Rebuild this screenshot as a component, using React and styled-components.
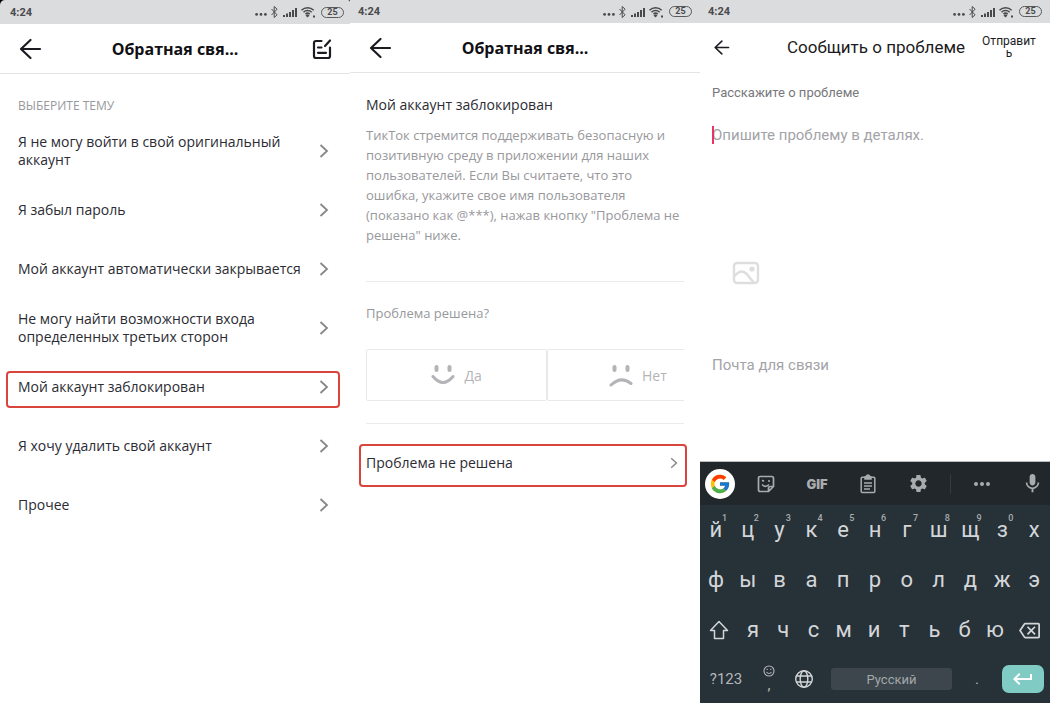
import React, { useState } from "react";
import styled, { createGlobalStyle } from "styled-components";
import { FcGoogle } from "react-icons/fc";
import {
  MdKeyboardReturn,
  MdMic,
  MdOutlineBackspace,
  MdSettings,
} from "react-icons/md";

const GlobalStyle = createGlobalStyle`
  * {
    box-sizing: border-box;
  }

  body {
    margin: 0;
    background-color: #fff;
    font-family: "Open Sans", "Noto Sans", sans-serif;
    color: #2b2b33;
  }

  button,
  input,
  textarea {
    margin: 0;
    padding: 0;
    border: none;
    background: none;
    color: inherit;
    font: inherit;
    text-align: left;
  }

  button {
    cursor: pointer;
  }

  svg {
    display: block;
    flex-shrink: 0;
  }
`;

const Screens = styled.div`
  display: grid;
  grid-template-columns: repeat(3, minmax(0, 1fr));
  min-height: 100vh;
`;

const Screen = styled.section`
  display: flex;
  flex-direction: column;
  font-family: ${(props) =>
    props.$android ? 'Roboto, "Noto Sans", sans-serif' : "inherit"};
`;

// Status bar
const StatusWrap = styled.div`
  background-color: ${(props) => (props.$first ? "#000" : "transparent")};
`;

const StatusBar = styled.div`
  display: flex;
  align-items: center;
  height: ${(props) => (props.$first ? "24px" : "23px")};
  padding: 0 ${(props) => (props.$first ? "6px 0 10px" : "8px")};
  border-radius: ${(props) => (props.$first ? "5px 2px 0 0" : "0")};
  background-color: #dbdcde;
  color: #4a4a4c;
  font-family: Roboto, sans-serif;
`;

const Clock = styled.time`
  flex: 1;
  font-size: 11px;
  font-weight: 700;
`;

const Battery = styled.span`
  width: 23px;
  height: 11px;
  margin-left: 5px;
  border: 1px solid #5a5a5c;
  border-radius: 6px;
  font-size: 9px;
  font-weight: 700;
  line-height: 9px;
  text-align: center;
`;

// Header
const Header = styled.header`
  display: grid;
  grid-template-columns: 40px 1fr 40px;
  align-items: center;
  height: 50px;
  padding: 0 18px;
  border-bottom: 1px solid #e4e4e6;
`;

const HeaderButton = styled.button`
  display: flex;
  justify-content: ${(props) => (props.$end ? "flex-end" : "flex-start")};
  color: #1b1b22;
`;

const Title = styled.h1`
  margin: 0;
  color: #101014;
  font-size: 16px;
  font-weight: 700;
  line-height: 20px;
  text-align: center;
`;

// Topics
const Topics = styled.main`
  padding: 22px 21px 0 18px;
`;

const SectionLabel = styled.h2`
  margin: 0;
  color: #98989c;
  font-size: 12px;
  font-weight: 400;
  line-height: 20px;
`;

const TopicList = styled.ul`
  margin: 0;
  padding: 5px 0 0;
  list-style: none;
`;

const Highlight = styled.span`
  position: absolute;
  inset: ${(props) => props.$inset};
  border: 2px solid #d9453d;
  border-radius: 4px;
  pointer-events: none;
`;

const RowButton = styled.button`
  position: relative;
  display: flex;
  align-items: center;
  justify-content: space-between;
  width: 100%;
  height: ${(props) => props.$height};
  padding-right: ${(props) => props.$endGap || "0"};
  font-size: 14px;
  line-height: 18px;
`;

const RowText = styled.span`
  max-width: 290px;
`;

// Answer
const Answer = styled.main`
  padding: 22px 16px 0;
`;

const AnswerTitle = styled.h2`
  margin: 0 0 10px;
  font-size: 14px;
  font-weight: 400;
  line-height: 20px;
`;

const AnswerText = styled.p`
  margin: 0;
  padding-bottom: 36px;
  border-bottom: 1px solid #ebebec;
  color: #98989c;
  font-size: 13px;
  line-height: 20px;
`;

const Question = styled.h3`
  margin: 21px 0 26px;
  color: #98989c;
  font-size: 13px;
  font-weight: 400;
  line-height: 20px;
`;

const Votes = styled.div`
  display: flex;
  overflow: hidden;
  padding-bottom: 22px;
  border-bottom: 1px solid #ebebec;
`;

const VoteButton = styled.button`
  display: flex;
  flex: 0 0 57%;
  align-items: center;
  justify-content: center;
  gap: 9px;
  height: 52px;
  border: 1px solid #e9e9eb;
  border-radius: 2px;
  color: #b4b4b8;
  font-size: 14px;
`;

const Unsolved = styled.div`
  padding-top: 20px;
`;

// Report form
const ReportHeader = styled.header`
  display: grid;
  grid-template-columns: 74px 1fr 56px;
  align-items: center;
  height: 48px;
  padding: 0 13px;
  color: #1b1b22;
`;

const ReportTitle = styled.h1`
  margin: 0;
  font-size: 17px;
  font-weight: 400;
  line-height: 20px;
`;

const SendButton = styled.button`
  font-size: 12px;
  line-height: 12px;
  text-align: center;
  word-break: break-all;
`;

const Form = styled.form`
  display: flex;
  flex-direction: column;
  padding: 12px 12px 0;
`;

const Label = styled.label`
  color: #77777c;
  font-size: 13px;
  line-height: 20px;
`;

const DetailsBox = styled.div`
  position: relative;
  margin-top: 20px;
`;

const Details = styled.textarea`
  display: block;
  width: 100%;
  height: 114px;
  outline: none;
  resize: none;
  font-size: 15px;
  line-height: 24px;

  &::placeholder {
    color: #a3a3a8;
    opacity: 1;
  }
`;

const Caret = styled.span`
  position: absolute;
  top: 3px;
  left: 0;
  width: 2px;
  height: 18px;
  background-color: #ea3562;
`;

const AttachButton = styled.button`
  align-self: flex-start;
  margin: 24px 20px 68px;
`;

const Email = styled.input`
  height: 24px;
  outline: none;
  font-size: 15px;

  &::placeholder {
    color: #a3a3a8;
    opacity: 1;
  }
`;

// Keyboard
const Keyboard = styled.div`
  margin-top: auto;
  border-top: 1px solid #b9bcbe;
  background-color: #273138;
  color: #d3d6d8;
`;

const Toolbar = styled.div`
  display: grid;
  grid-template-columns: 40fr 52fr 50fr 51fr 50fr 14fr 50fr 43fr;
  align-items: center;
  height: 43px;
  background-color: #21272b;
  color: #a9acae;
`;

const ToolButton = styled.button`
  display: flex;
  align-items: center;
  justify-content: ${(props) => (props.$end ? "flex-end" : "center")};
  padding-right: ${(props) => (props.$end ? "6px" : "0")};
  font-family: Inter, sans-serif;
  font-size: 13px;
  font-weight: 900;
`;

const GoogleBadge = styled.span`
  display: flex;
  align-items: center;
  justify-content: center;
  width: 30px;
  height: 30px;
  border-radius: 50%;
  background-color: #fff;
`;

const ToolDivider = styled.span`
  justify-self: center;
  width: 1px;
  height: 20px;
  background-color: #353b3f;
`;

const KeyRow = styled.div`
  display: grid;
  grid-template-columns: ${(props) => props.$columns};
  align-items: center;
  height: ${(props) => props.$height || "50px"};
`;

const Key = styled.button`
  position: relative;
  display: flex;
  flex-direction: column;
  align-items: center;
  justify-content: center;
  height: 40px;
  font-size: ${(props) => (props.$small ? "15px" : "22px")};
  line-height: ${(props) => (props.$small ? "16px" : "24px")};
  color: ${(props) => (props.$small ? "#b4b7b9" : "inherit")};
`;

const KeyHint = styled.sup`
  position: absolute;
  top: 3px;
  left: 22px;
  color: #a9acae;
  font-size: 9px;
  font-weight: 500;
  line-height: 10px;
`;

const SpaceKey = styled.button`
  height: 22px;
  margin: 0 8px 0 9px;
  border-radius: 3px;
  background-color: #3c464c;
  color: #a3a8ab;
  font-size: 13px;
  text-align: center;
`;

const EnterKey = styled.button`
  display: flex;
  align-items: center;
  justify-content: center;
  height: 28px;
  margin: 0 6px 0 8px;
  border-radius: 7px;
  background-color: #80cbc4;
  color: #fff;
`;

const topics = [
  "Я не могу войти в свой оригинальный аккаунт",
  "Я забыл пароль",
  "Мой аккаунт автоматически закрывается",
  "Не могу найти возможности входа определенных третьих сторон",
  "Мой аккаунт заблокирован",
  "Я хочу удалить свой аккаунт",
  "Прочее",
];

const topRow = ["й", "ц", "у", "к", "е", "н", "г", "ш", "щ", "з", "х"];
const middleRow = ["ф", "ы", "в", "а", "п", "р", "о", "л", "д", "ж", "э"];
const bottomRow = ["я", "ч", "с", "м", "и", "т", "ь", "б", "ю"];

function StatusIcons() {
  return (
    <svg width="61" height="14" viewBox="0 0 61 14" fill="none">
      <g fill="#4a4a4c">
        <circle cx="1.6" cy="9.4" r="1.4" />
        <circle cx="6" cy="9.4" r="1.4" />
        <circle cx="10.4" cy="9.4" r="1.4" />
        <path d="M28 10h2v2h-2zM31 8.5h2V12h-2zM34 7h2v5h-2zM37 5h2v7h-2zM40 3h2v9h-2z" />
        <path d="M52.5 9.2l2 1.3-2 2-2-2zM58 10.5h2v2h-2z" />
      </g>
      <path
        d="M16.5 4l5.6 5.8-2.9 2.7v-11l2.9 2.7-5.6 5.8"
        stroke="#4a4a4c"
        strokeWidth="1"
      />
      <path
        d="M46.5 5.2c3.4-3.2 8.8-3.2 12.2 0M48.5 7.2c2.3-2.2 5.9-2.2 8.2 0M50.5 9.1c1.2-1.1 3-1.1 4.2 0"
        stroke="#4a4a4c"
        strokeWidth="1.5"
      />
    </svg>
  );
}

function Status({ first }) {
  return (
    <StatusWrap $first={first}>
      <StatusBar $first={first}>
        <Clock>4:24</Clock>
        <StatusIcons />
        <Battery>25</Battery>
      </StatusBar>
    </StatusWrap>
  );
}

function BackArrow({ size }) {
  return (
    <svg
      width={size}
      height={size}
      viewBox="0 0 24 24"
      fill="none"
      stroke="currentColor"
      strokeWidth="2.2"
      strokeLinecap="round"
      strokeLinejoin="round"
    >
      <path d="M12.5 3L3 12l9.5 9M3.2 12H22" />
    </svg>
  );
}

function EditIcon() {
  return (
    <svg
      width="20"
      height="22"
      viewBox="0 0 20 22"
      fill="none"
      stroke="currentColor"
      strokeWidth="2.2"
      strokeLinecap="round"
    >
      <path d="M9.5 3H4Q2 3 2 5v13q0 2 2 2h12q2 0 2-2V9.5M18 2.5l-5 5.5M6 9.5h3.5M6 14.8h8" />
    </svg>
  );
}

function Chevron({ small }) {
  return (
    <svg
      width={small ? 8 : 10}
      height={small ? 12 : 14}
      viewBox="0 0 10 14"
      fill="none"
      stroke="#86868b"
      strokeWidth="1.8"
    >
      <path d="M1.5 1L8 7l-6.5 6" />
    </svg>
  );
}

function Face({ sad }) {
  return (
    <svg
      width="24"
      height="24"
      viewBox="0 0 24 24"
      fill="none"
      stroke="#b4b4b8"
      strokeLinecap="round"
    >
      <path d="M5.5 4v3M18.500 4v3" strokeWidth="4" />
      <path
        d={sad ? "M2 22q10-9.500 20-1.500" : "M2 13.500q10 12 20 0"}
        strokeWidth="3"
      />
    </svg>
  );
}

function PictureIcon() {
  return (
    <svg
      width="28"
      height="24"
      viewBox="0 0 28 24"
      fill="none"
      stroke="#dedee0"
      strokeWidth="2.4"
    >
      <rect x="2" y="2" width="24" height="20" rx="3" />
      <path d="M2.500 15C8 9 12 9 16 14.500c2 2.800 4 5 6 7" />
      <circle cx="20" cy="8" r="2.6" fill="#dedee0" stroke="none" />
    </svg>
  );
}

function StickerIcon() {
  return (
    <svg
      width="18"
      height="18"
      viewBox="0 0 18 18"
      fill="none"
      stroke="currentColor"
      strokeWidth="1.7"
    >
      <path d="M11.500 16.500H3.200q-1.700 0-1.700-1.700V3.200q0-1.700 1.700-1.700h11.600q1.700 0 1.700 1.700v8.300zM11.500 16.500v-3.300q0-1.700 1.700-1.700h3.300" />
      <path d="M5 5.200l2 1M11 6h2M5 9.500q3.500 3.600 7 0" />
    </svg>
  );
}

function ClipboardIcon() {
  return (
    <svg
      width="16"
      height="20"
      viewBox="0 0 16 20"
      fill="none"
      stroke="currentColor"
      strokeWidth="1.5"
    >
      <rect x="1.2" y="3.2" width="13.6" height="15.3" rx="1" />
      <path d="M5 3h6v2h-6zM6 2.500q2-3 4 0" fill="currentColor" />
      <path d="M4 9h8M4 12h8M4 15h6" />
    </svg>
  );
}

function ShiftIcon() {
  return (
    <svg
      width="20"
      height="20"
      viewBox="0 0 20 20"
      fill="none"
      stroke="currentColor"
      strokeWidth="1.5"
      strokeLinejoin="round"
    >
      <path d="M10 1.500l8.500 9h-4v8h-9v-8h-4z" />
    </svg>
  );
}

function SmileIcon() {
  return (
    <svg
      width="12"
      height="12"
      viewBox="0 0 12 12"
      fill="none"
      stroke="currentColor"
      strokeWidth="1.1"
    >
      <circle cx="6" cy="6" r="5" />
      <path d="M3.500 7q2.500 3 5 0M4.200 3.800v1.200M7.800 3.800v1.200" />
    </svg>
  );
}

function GlobeIcon() {
  return (
    <svg
      width="20"
      height="20"
      viewBox="0 0 20 20"
      fill="none"
      stroke="currentColor"
      strokeWidth="1.4"
    >
      <circle cx="10" cy="10" r="8.3" />
      <ellipse cx="10" cy="10" rx="3.8" ry="8.3" />
      <path d="M2.500 7h15M2.500 13h15" />
    </svg>
  );
}

function MoreIcon() {
  return (
    <svg width="18" height="6" viewBox="0 0 18 6" fill="currentColor">
      <circle cx="3" cy="3" r="2" />
      <circle cx="9" cy="3" r="2" />
      <circle cx="15" cy="3" r="2" />
    </svg>
  );
}

function TopicsScreen() {
  const [selected, setSelected] = useState(4);

  return (
    <Screen>
      <Status first />
      <Header>
        <HeaderButton aria-label="Назад">
          <BackArrow size={24} />
        </HeaderButton>
        <Title>Обратная свя...</Title>
        <HeaderButton $end aria-label="Написать">
          <EditIcon />
        </HeaderButton>
      </Header>
      <Topics>
        <SectionLabel>ВЫБЕРИТЕ ТЕМУ</SectionLabel>
        <TopicList>
          {topics.map((topic, index) => (
            <li key={topic}>
              <RowButton $height="59px" onClick={() => setSelected(index)}>
                <RowText>{topic}</RowText>
                <Chevron />
                {selected === index && (
                  <Highlight $inset="14px -11px 8px -12px" />
                )}
              </RowButton>
            </li>
          ))}
        </TopicList>
      </Topics>
    </Screen>
  );
}

function AnswerScreen() {
  return (
    <Screen>
      <Status />
      <Header>
        <HeaderButton aria-label="Назад">
          <BackArrow size={24} />
        </HeaderButton>
        <Title>Обратная свя...</Title>
      </Header>
      <Answer>
        <AnswerTitle>Мой аккаунт заблокирован</AnswerTitle>
        <AnswerText>
          ТикТок стремится поддерживать безопасную и позитивную среду в
          приложении для наших пользователей. Если Вы считаете, что это ошибка,
          укажите свое имя пользователя (показано как @***), нажав кнопку
          "Проблема не решена" ниже.
        </AnswerText>
        <Question>Проблема решена?</Question>
        <Votes>
          <VoteButton>
            <Face />
            Да
          </VoteButton>
          <VoteButton>
            <Face sad />
            Нет
          </VoteButton>
        </Votes>
        <Unsolved>
          <RowButton $height="38px" $endGap="6px">
            <RowText>Проблема не решена</RowText>
            <Chevron small />
            <Highlight $inset="0 -3px -5px -7px" />
          </RowButton>
        </Unsolved>
      </Answer>
    </Screen>
  );
}

function ReportScreen() {
  const [details, setDetails] = useState("");
  const [email, setEmail] = useState("");

  return (
    <Screen $android>
      <Status />
      <ReportHeader>
        <HeaderButton aria-label="Назад">
          <BackArrow size={17} />
        </HeaderButton>
        <ReportTitle>Сообщить о проблеме</ReportTitle>
        <SendButton type="submit" form="report">
          Отправить
        </SendButton>
      </ReportHeader>
      <Form id="report" onSubmit={(e) => e.preventDefault()}>
        <Label htmlFor="details">Расскажите о проблеме</Label>
        <DetailsBox>
          <Details
            id="details"
            placeholder="Опишите проблему в деталях."
            value={details}
            onChange={(e) => setDetails(e.target.value)}
          />
          {!details && <Caret />}
        </DetailsBox>
        <AttachButton type="button" aria-label="Добавить изображение">
          <PictureIcon />
        </AttachButton>
        <Email
          type="email"
          aria-label="Почта для связи"
          placeholder="Почта для связи"
          value={email}
          onChange={(e) => setEmail(e.target.value)}
        />
      </Form>
      <Keyboard>
        <Toolbar>
          <ToolButton aria-label="Google">
            <GoogleBadge>
              <FcGoogle size={22} />
            </GoogleBadge>
          </ToolButton>
          <ToolButton aria-label="Стикеры">
            <StickerIcon />
          </ToolButton>
          <ToolButton>GIF</ToolButton>
          <ToolButton aria-label="Буфер обмена">
            <ClipboardIcon />
          </ToolButton>
          <ToolButton aria-label="Настройки">
            <MdSettings size={21} />
          </ToolButton>
          <ToolDivider />
          <ToolButton aria-label="Ещё">
            <MoreIcon />
          </ToolButton>
          <ToolButton $end aria-label="Голосовой ввод">
            <MdMic size={23} />
          </ToolButton>
        </Toolbar>
        <KeyRow $columns="repeat(11, 1fr)">
          {topRow.map((letter, index) => (
            <Key key={letter}>
              {letter}
              {index < 10 && <KeyHint>{(index + 1) % 10}</KeyHint>}
            </Key>
          ))}
        </KeyRow>
        <KeyRow $columns="repeat(11, 1fr)">
          {middleRow.map((letter) => (
            <Key key={letter}>{letter}</Key>
          ))}
        </KeyRow>
        <KeyRow $columns="38px repeat(9, 1fr) 40px">
          <Key aria-label="Shift">
            <ShiftIcon />
          </Key>
          {bottomRow.map((letter) => (
            <Key key={letter}>{letter}</Key>
          ))}
          <Key aria-label="Удалить">
            <MdOutlineBackspace size={21} />
          </Key>
        </KeyRow>
        <KeyRow $columns="52px 34px 36px 1fr 34px 56px" $height="48px">
          <Key $small>?123</Key>
          <Key $small>
            <SmileIcon />,
          </Key>
          <Key aria-label="Язык">
            <GlobeIcon />
          </Key>
          <SpaceKey>Русский</SpaceKey>
          <Key $small>.</Key>
          <EnterKey aria-label="Ввод">
            <MdKeyboardReturn size={24} />
          </EnterKey>
        </KeyRow>
      </Keyboard>
    </Screen>
  );
}

function App() {
  return (
    <>
      <GlobalStyle />
      <Screens>
        <TopicsScreen />
        <AnswerScreen />
        <ReportScreen />
      </Screens>
    </>
  );
}

export default App;
